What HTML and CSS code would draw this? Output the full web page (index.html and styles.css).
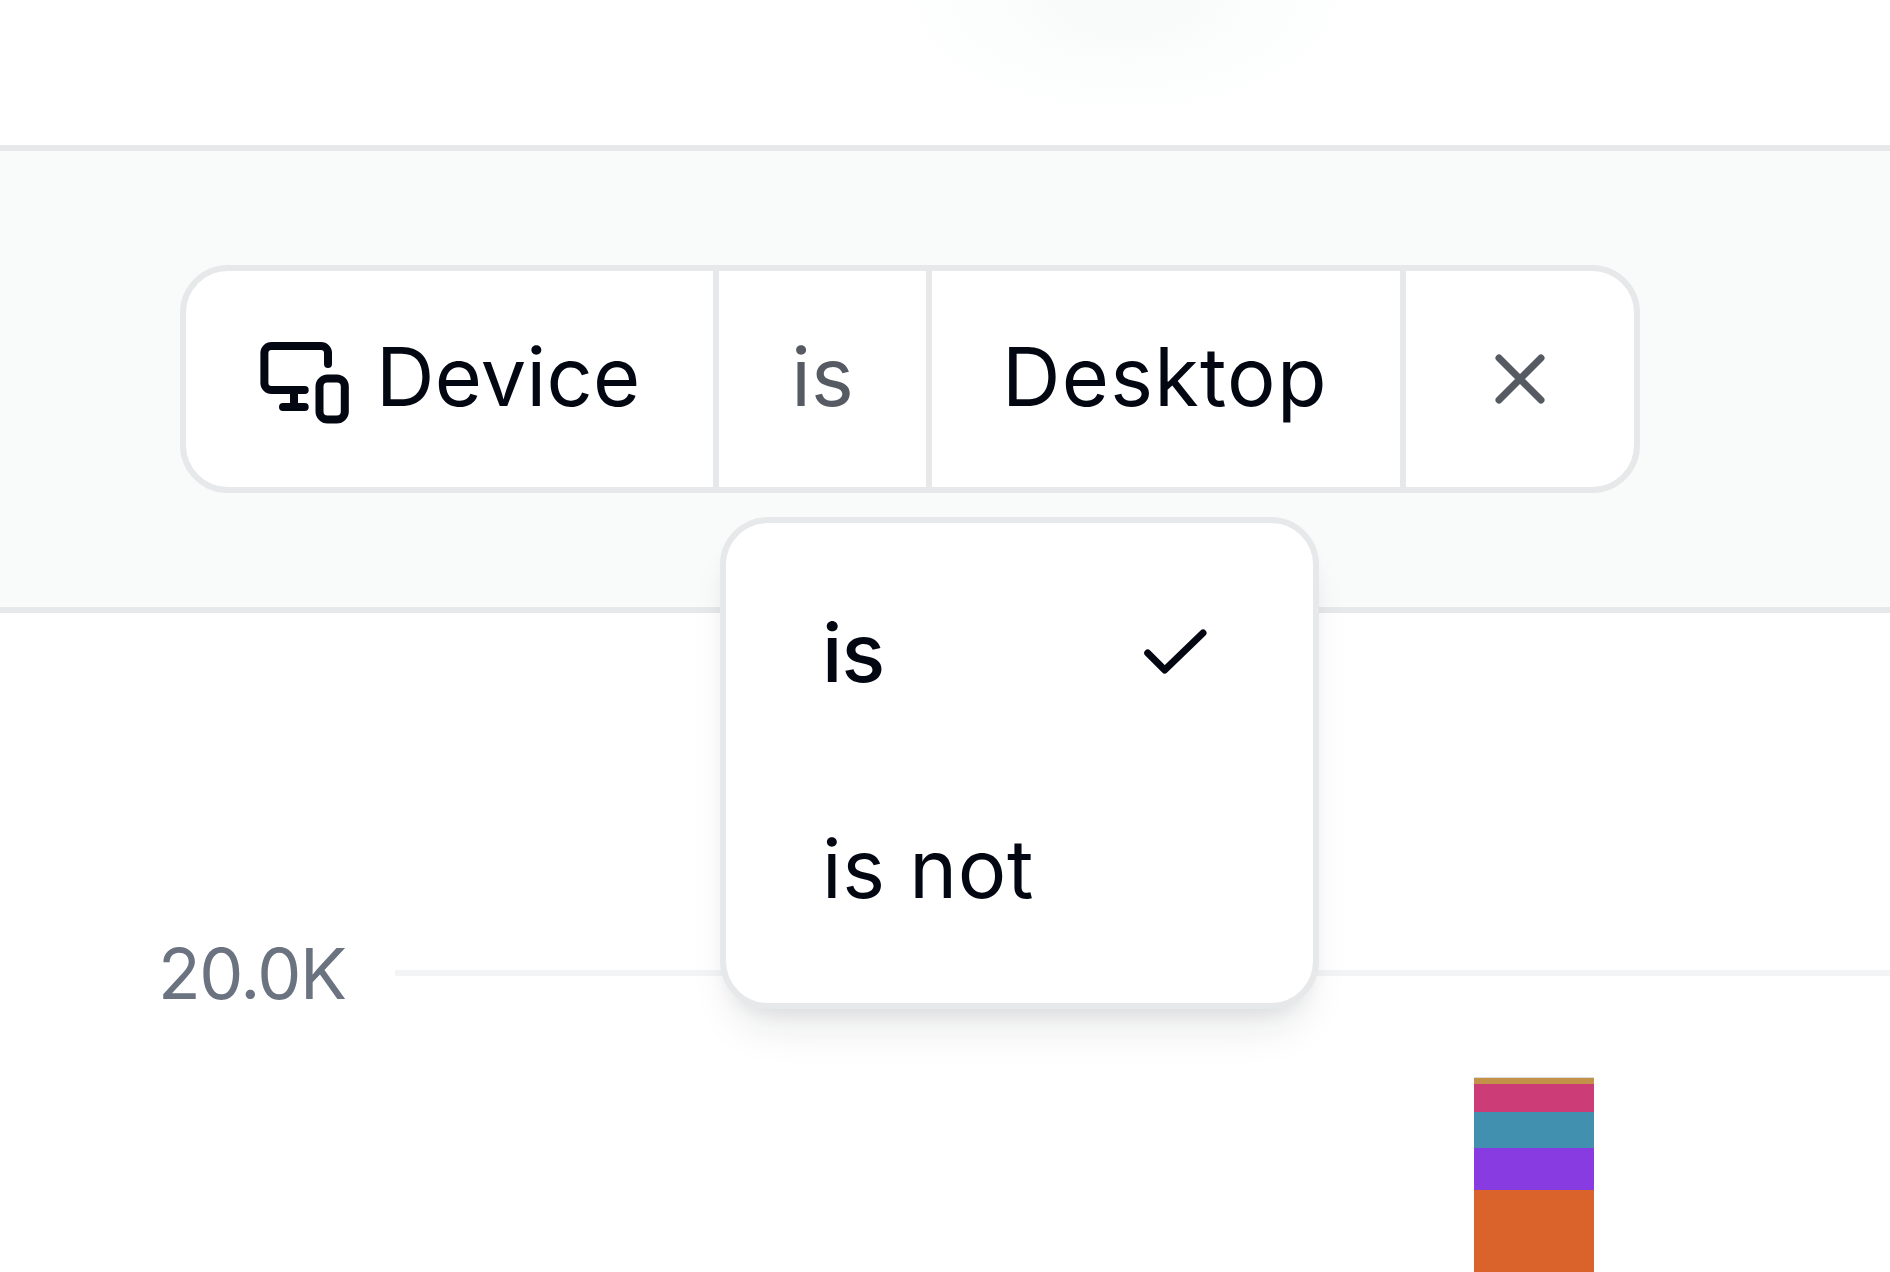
FILE: index.html
```html
<!DOCTYPE html>
<html lang="en">
<head>
<meta charset="utf-8">
<title>Device filter</title>
<link rel="stylesheet" href="styles.css">
</head>
<body>
<div class="hero"></div>
<section class="filterbar">
  <div class="filter">
    <div class="seg seg-device">
      <svg class="icon-device" viewBox="0 0 89 92" width="89" height="92" fill="none" stroke="currentColor" stroke-width="8" stroke-linecap="round" stroke-linejoin="round">
        <path d="M68 31V20a7 7 0 0 0-7-7H11.400a7 7 0 0 0-7 7v30a7 7 0 0 0 7 7H44.700"/>
        <path d="M34 57v17M23 74h21.700"/>
        <rect x="59.500" y="45.500" width="25.300" height="41" rx="8"/>
      </svg>
      <span>Device</span>
    </div>
    <div class="seg seg-op">is</div>
    <div class="seg seg-value">Desktop</div>
    <div class="seg seg-close">
      <svg viewBox="0 0 52 52" width="52" height="52" fill="none" stroke="currentColor" stroke-width="7" stroke-linecap="round">
        <path d="M5 5l42 42M47 5L5 47"/>
      </svg>
    </div>
  </div>
  <div class="menu">
    <div class="menu-item menu-item-selected">
      <span>is</span>
      <svg viewBox="0 0 71 50" width="71" height="50" fill="none" stroke="currentColor" stroke-width="7" stroke-linecap="round" stroke-linejoin="round">
        <path d="M7.700 26l17 17L63 6"/>
      </svg>
    </div>
    <div class="menu-item menu-item-plain"><span>is not</span></div>
  </div>
</section>
<section class="chart">
  <div class="grid-row">
    <span class="tick">20.0K</span>
    <div class="grid-line"></div>
  </div>
  <div class="bars">
    <div class="bar">
      <div class="s s-tan"></div>
      <div class="s s-pink"></div>
      <div class="s s-blue"></div>
      <div class="s s-purple"></div>
      <div class="s s-orange"></div>
    </div>
  </div>
</section>
</body>
</html>
```
FILE: styles.css
```css
* { box-sizing: border-box; }
html, body { margin: 0; height: 1272px; overflow: hidden; background: #fff; }
body { font-family: Inter, "Liberation Sans", sans-serif; color: #030712; }

.hero {
  height: 145px;
  background: radial-gradient(ellipse 240px 122px at 1125px 0, #f9fafa 0, #f9fafa 25%, #fcfdfd 60%, #fff 100%);
}

.filterbar {
  position: relative;
  background: #f9fafa;
  border-top: 6px solid #e6e8ea;
  border-bottom: 6px solid #e6e8ea;
  padding: 114px 0 114px 180px;
}

.filter {
  display: flex;
  width: 1460px;
  height: 228px;
  background: #fff;
  border: 6px solid #e6e8ea;
  border-radius: 48px;
  font-size: 81px;
  font-weight: 420;
}

.seg {
  display: flex;
  flex-shrink: 0;
  align-items: center;
  border-right: 6px solid #e6e8ea;
  padding-bottom: 4px;
}
.seg-device { width: 533px; padding-left: 74px; gap: 27px; letter-spacing: .3px; }
.seg-op { width: 213px; justify-content: center; color: #565a63; }
.seg-value { width: 474px; padding-left: 70px; letter-spacing: 1.3px; }
.seg-close { flex: 1; justify-content: center; border-right: 0; padding-bottom: 0; color: #565a63; }
.seg svg { flex-shrink: 0; }
.icon-device { margin-bottom: -4px; }

.menu {
  position: absolute;
  top: 366px;
  left: 720px;
  z-index: 2;
  width: 599px;
  height: 492px;
  padding: 24px 0;
  background: #fff;
  border: 6px solid #e6e8ea;
  border-radius: 48px;
  font-size: 81px;
  box-shadow: 0 30px 45px -15px rgba(17, 24, 39, .11), 0 12px 18px -8px rgba(17, 24, 39, .07);
}
.menu-item {
  display: flex;
  align-items: center;
  justify-content: space-between;
  height: 216px;
  padding: 0 102px 0 96px;
  font-weight: 420;
}
.menu-item-plain { letter-spacing: .7px; }
.menu-item-plain span { padding-bottom: 5px; }
.menu-item-selected { font-weight: 540; letter-spacing: -1px; }
.menu-item-selected span { padding-bottom: 4px; }
.menu-item-selected svg { margin-bottom: 6px; }

.chart { padding: 318px 0 0 158px; }
.grid-row { display: flex; align-items: center; height: 84px; }
.tick { width: 237px; font-size: 70px; letter-spacing: -1.4px; color: #6b7280; }
.grid-line { flex: 1; height: 6px; background: #f3f4f6; }

.bars { display: flex; justify-content: flex-end; padding-right: 296px; margin-top: 62px; }
.bar { width: 120px; border-top: 1px solid #ddd; }
.s-tan { height: 6px; background: #c49148; }
.s-pink { height: 28px; background: #cc3d78; }
.s-blue { height: 36px; background: #4190b0; }
.s-purple { height: 42px; background: #893be2; }
.s-orange { height: 82px; background: #da622b; }
```
